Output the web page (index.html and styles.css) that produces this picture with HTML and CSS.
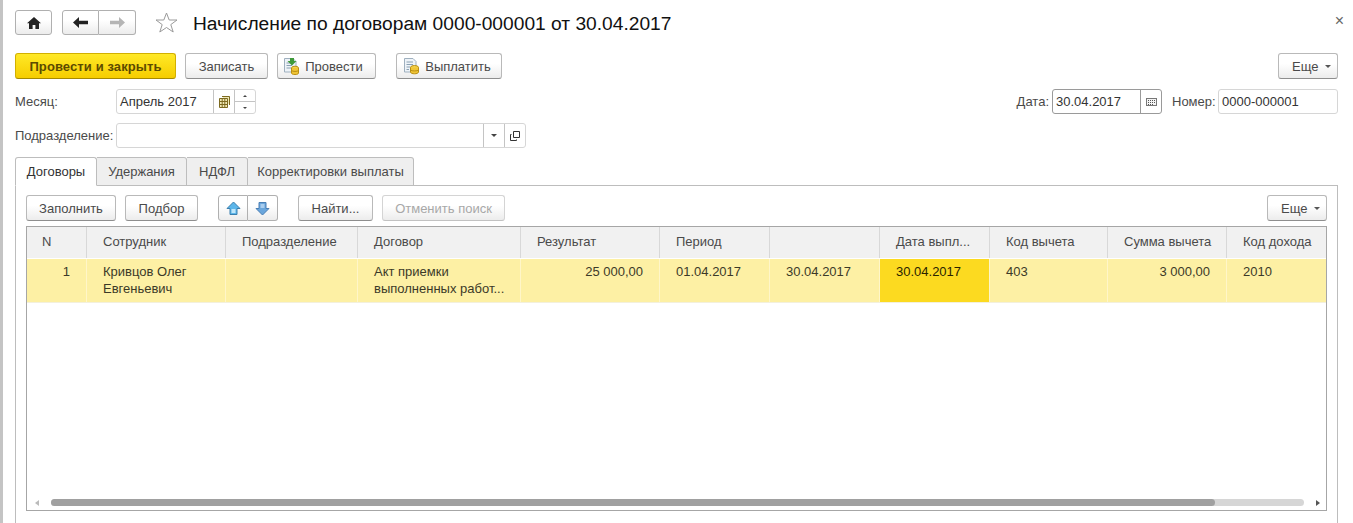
FILE: index.html
```html
<!DOCTYPE html>
<html lang="ru">
<head>
<meta charset="utf-8">
<title>Начисление по договорам</title>
<link rel="stylesheet" href="styles.css">
</head>
<body>
<div class="window">
  <header class="titlebar">
    <button class="btn nav-home"><svg width="14" height="12" viewBox="0 0 14 12"><path d="M7 0 14 6.2 12 6.2V12H8.4V8H5.6V12H2V6.2H0Z" fill="#222"/></svg></button>
    <div class="btn-group nav-arrows">
      <button class="btn seg"><svg width="15" height="11" viewBox="0 0 15 11"><path d="M0 5.5 6 0V3.8H15V7.2H6V11Z" fill="#222"/></svg></button>
      <button class="btn seg"><svg width="15" height="11" viewBox="0 0 15 11"><path d="M15 5.5 9 0V3.8H0V7.2H9V11Z" fill="#b5b5b5"/></svg></button>
    </div>
    <svg class="star" width="23" height="21" viewBox="0 0 23 21"><path d="M11.5 1 14.2 8H22L15.8 12.6 18.2 20 11.5 15.5 4.8 20 7.2 12.6 1 8H8.8Z" fill="#fff" stroke="#9a9a9a"/></svg>
    <h1 class="title">Начисление по договорам 0000-000001 от 30.04.2017</h1>
    <span class="close">×</span>
  </header>

  <div class="toolbar main-tools">
    <button class="btn primary">Провести и закрыть</button>
    <button class="btn w-save">Записать</button>
    <button class="btn w-post"><svg class="ico" width="17" height="18" viewBox="0 0 17 18"><path d="M1.5 1.5H10L13 4.5V15H1.5Z" fill="#eef3f8" stroke="#9fb0bf"/><path d="M3.5 6H10M3.5 8.500H9M3.500 11H8" stroke="#8aa0b2"/><path d="M7 1H11V4H13.500L9 8.500 4.500 4H7Z" fill="#3f9a3a"/><ellipse cx="12" cy="11" rx="3.500" ry="1.800" fill="#f5d24a" stroke="#b98f14"/><path d="M8.500 11V16C8.500 17 10 17.500 12 17.500S15.500 17 15.500 16V11" fill="#f0c536" stroke="#b98f14"/><path d="M8.500 13.500C9.500 14.800 14.500 14.800 15.500 13.500" fill="none" stroke="#b98f14"/></svg>Провести</button>
    <button class="btn w-pay"><svg class="ico" width="17" height="18" viewBox="0 0 17 18"><path d="M1.500 1.500H10L13 4.500V15H1.500Z" fill="#eef3f8" stroke="#9fb0bf"/><path d="M3.500 5H10M3.500 7.500H10M3.500 10H7M3.500 12.500H6" stroke="#8aa0b2"/><ellipse cx="11.500" cy="10.500" rx="4" ry="2" fill="#f5d24a" stroke="#b98f14"/><path d="M7.500 10.500V15C7.500 16.200 9.500 16.800 11.500 16.800S15.500 16.200 15.500 15V10.500" fill="#f0c536" stroke="#b98f14"/><path d="M7.500 13C8.500 14.300 14.500 14.300 15.500 13" fill="none" stroke="#b98f14"/></svg>Выплатить</button>
    <button class="btn more push">Еще<i class="caret"></i></button>
  </div>

  <div class="form-row row-month">
    <label class="lbl lbl-wide">Месяц:</label>
    <div class="field f-month">
      <span class="val">Апрель 2017</span>
      <span class="part part-cal"><svg width="11" height="12" viewBox="0 0 11 12"><path d="M3 .5H10.500V9M.5 2.500H8.500V11.500H.5ZM.5 5.500H8.500M.5 8.500H8.500M3.200 2.500V11.500M5.800 2.500V11.500" fill="#f0e8b4" stroke="#7d6a20"/></svg></span>
      <span class="spin"><span class="spin-up"><i class="tri-up"></i></span><span class="spin-down"><i class="tri-down"></i></span></span>
    </div>
    <label class="lbl lbl-date push">Дата:</label>
    <div class="field f-date">
      <span class="val">30.04.2017</span>
      <span class="part part-date"><svg width="11" height="8" viewBox="0 0 11 8"><rect x=".5" y=".5" width="10" height="7" fill="#f4f4f4" stroke="#777"/><path d="M2 2.500H9.500M2 4.500H9.500M2 6.500H7.500" stroke="#555" stroke-dasharray="1 1"/></svg></span>
    </div>
    <label class="lbl lbl-num">Номер:</label>
    <div class="field f-num"><span class="val">0000-000001</span></div>
  </div>

  <div class="form-row row-dep">
    <label class="lbl lbl-wide">Подразделение:</label>
    <div class="field f-dep">
      <span class="val"></span>
      <span class="part part-drop"><i class="tri-down dark"></i></span>
      <span class="part part-open"><svg width="10" height="10" viewBox="0 0 10 10"><path d="M3.500.5H9.500V6.500H3.500ZM1.500 3.500H.5V9.500H6.500V8.500" fill="none" stroke="#333"/></svg></span>
    </div>
  </div>

  <nav class="tabs">
    <span class="tab active t1">Договоры</span>
    <span class="tab t2">Удержания</span>
    <span class="tab t3">НДФЛ</span>
    <span class="tab t4">Корректировки выплаты</span>
  </nav>

  <section class="panel">
    <div class="toolbar">
      <button class="btn w-fill">Заполнить</button>
      <button class="btn w-pick">Подбор</button>
      <div class="btn-group updown">
        <button class="btn seg"><svg width="15" height="15" viewBox="0 0 15 15"><path d="M7.500 1 14 7.500H11V13.500H4V7.500H1Z" fill="#5cb6ea" stroke="#3b7fae"/><path d="M5.500 8H9.500V12H5.500Z" fill="#bfe6fa"/></svg></button>
        <button class="btn seg"><svg width="15" height="15" viewBox="0 0 15 15"><path d="M7.500 14 14 7.500H11V1.500H4V7.500H1Z" fill="#6aa6dc" stroke="#4a7fb5"/><path d="M5.500 3H9.500V7H5.500Z" fill="#a9cdee"/></svg></button>
      </div>
      <button class="btn w-find">Найти...</button>
      <button class="btn w-cancel disabled">Отменить поиск</button>
      <button class="btn more push">Еще<i class="caret"></i></button>
    </div>

    <div class="table">
      <div class="grid head">
        <div class="cell c-n">N</div>
        <div class="cell">Сотрудник</div>
        <div class="cell">Подразделение</div>
        <div class="cell">Договор</div>
        <div class="cell">Результат</div>
        <div class="cell">Период</div>
        <div class="cell"></div>
        <div class="cell">Дата выпл...</div>
        <div class="cell">Код вычета</div>
        <div class="cell num">Сумма вычета</div>
        <div class="cell">Код дохода</div>
      </div>
      <div class="grid row">
        <div class="cell num">1</div>
        <div class="cell">Кривцов Олег Евгеньевич</div>
        <div class="cell"></div>
        <div class="cell">Акт приемки выполненных работ...</div>
        <div class="cell num">25 000,00</div>
        <div class="cell">01.04.2017</div>
        <div class="cell">30.04.2017</div>
        <div class="cell current">30.04.2017</div>
        <div class="cell">403</div>
        <div class="cell num">3 000,00</div>
        <div class="cell">2010</div>
      </div>
      <div class="table-empty"></div>
      <div class="hscroll">
        <i class="arrow-left"></i>
        <div class="track"><div class="thumb"></div></div>
        <i class="arrow-right"></i>
      </div>
    </div>
  </section>
</div>
</body>
</html>
```
FILE: styles.css
```css
* { box-sizing: border-box; }
html, body { margin: 0; height: 100%; background: #fff; overflow: hidden; }
body { font: 13px/17px "Liberation Sans", Arial, sans-serif; color: #4a4a4a; }
svg { display: block; }
i { display: block; }

.window {
  height: 523px;
  border-left: 3px solid #c4c4c4;
  padding: 10px 15px 0 12px;
  display: flex;
  flex-direction: column;
}

/* title bar */
.titlebar { display: flex; align-items: center; height: 25px; flex: none; }
.title { margin: 1px 0 0 15px; font: 400 19.2px/25px "Liberation Sans", Arial, sans-serif; color: #111; white-space: nowrap; }
.star { margin-left: 19px; }
.close { margin-left: auto; margin-right: -6px; font-size: 16px; line-height: 16px; color: #666; margin-top: -3px; }

/* buttons */
.btn {
  display: flex; align-items: center; justify-content: center;
  height: 26px; padding: 0; flex: none;
  font: 13px/17px "Liberation Sans", Arial, sans-serif; color: #4a4a4a;
  background: linear-gradient(#fff 40%, #ececec);
  border: 1px solid #b9b9b9; border-bottom-color: #8e8e8e;
  border-radius: 3px;
}
.nav-home { width: 37px; height: 25px; border-color: #b0b0b0; }
.btn-group { display: flex; flex: none; }
.btn-group .seg { border-radius: 0; border-left: 0; }
.btn-group .seg:first-child { border-left: 1px solid #b0b0b0; border-radius: 3px 0 0 3px; }
.btn-group .seg:last-child { border-radius: 0 3px 3px 0; }
.nav-arrows { margin-left: 10px; }
.nav-arrows .seg { width: 37px; height: 25px; border-color: #b0b0b0; }
.primary {
  width: 161px; font-weight: 700; color: #5c4a00; letter-spacing: .1px;
  background: linear-gradient(#ffe927, #f6cd00);
  border-color: #d2b000; border-bottom-color: #a68a00;
}
.toolbar { display: flex; align-items: center; flex: none; }
.main-tools { margin-top: 18px; }
.w-save { width: 83px; }
.w-post { width: 99px; padding-right: 3px; }
.w-pay { width: 106px; }
.ico { margin-right: 5px; margin-left: -4px; }
.more { width: 60px; justify-content: flex-start; padding-left: 13px; }
.push { margin-left: auto !important; }
.caret { width: 0; height: 0; margin-left: 7px; margin-top: 1px; border: 3px solid transparent; border-top-color: #555; border-bottom: 0; }

/* form rows */
.form-row { display: flex; align-items: center; height: 25px; flex: none; }
.row-month { margin-top: 10px; }
.row-dep { margin-top: 9px; }
.lbl { white-space: nowrap; }
.lbl-wide { width: 101px; }
.lbl-date { margin-right: 3px; }
.lbl-num { width: 46px; margin-left: 10px; }
.field {
  display: flex; height: 25px; flex: none;
  border: 1px solid #d6d6d6; border-radius: 3px; background: #fff;
  color: #333;
}
.val { flex: 1; padding-left: 3px; line-height: 23px; white-space: nowrap; }
.part { display: flex; align-items: center; justify-content: center; flex: none; border-left: 1px solid #c4c4c4; }
.f-month { width: 140px; }
.part-cal { width: 21px; }
.spin { width: 21px; flex: none; display: flex; flex-direction: column; border-left: 1px solid #c4c4c4; }
.spin-up, .spin-down { flex: 1; display: flex; align-items: center; justify-content: center; }
.spin-up { border-bottom: 1px solid #c4c4c4; }
.tri-up { width: 0; height: 0; border: 2px solid transparent; border-bottom-color: #444; border-top: 0; }
.tri-down { width: 0; height: 0; border: 2px solid transparent; border-top-color: #444; border-bottom: 0; }
.tri-down.dark { border-width: 3px; border-bottom: 0; }
.f-date { width: 110px; border-color: #9a9a9a; }
.part-date { width: 21px; border-left-color: #9a9a9a; }
.f-num { width: 120px; }
.f-dep { width: 410px; }
.part-drop, .part-open { width: 21px; }

/* tabs */
.tabs { display: flex; margin-top: 9px; height: 29px; flex: none; position: relative; z-index: 1; margin-bottom: -1px; }
.tab {
  display: flex; align-items: center; justify-content: center;
  height: 29px; background: #efefef; white-space: nowrap;
  border: 1px solid #bdbdbd; border-left: 0; border-radius: 0 3px 0 0;
}
.tab.active { background: #fff; border-left: 1px solid #bdbdbd; border-bottom-color: #fff; border-radius: 3px 3px 0 0; color: #333; }
.t1 { width: 82px; }
.t2 { width: 90px; }
.t3 { width: 61px; }
.t4 { width: 166px; }

/* panel */
.panel {
  flex: 1; min-height: 0;
  border: 1px solid #bdbdbd; border-bottom: 0;
  padding: 9px 10px 0;
}
.toolbar > .btn + .btn, .toolbar > .btn-group + .btn { margin-left: 9px; }
.toolbar > .updown + .btn, .toolbar > .btn + .w-pay { margin-left: 20px; }
.w-fill { width: 90px; }
.w-pick { width: 73px; }
.updown { margin-left: 20px; }
.updown .seg { width: 30px; border-color: #b0b0b0; }
.w-find { width: 75px; }
.w-cancel { width: 123px; }
.disabled { color: #a8a8a8; border-color: #d4d4d4; border-bottom-color: #c2c2c2; }

/* table */
.table {
  margin-top: 5px; height: 285px;
  display: flex; flex-direction: column;
  border: 1px solid #a6a6a6;
}
.grid {
  display: grid; flex: none;
  grid-template-columns: 60px 139px 132px 163px 139px 110px 110px 110px 118px 119px 99px;
}
.head { height: 32px; background: #f1f1f1; border-bottom: 1px solid #fff; }
.head .cell { line-height: 30px; border-right: 1px solid #d8d8d8; white-space: nowrap; }
.head .c-n { padding-left: 15px; }
.cell { padding: 0 15px 0 16px; }
.head .cell:last-child, .row .cell:last-child { border-right: 0; }
.num { text-align: right; }
.row { height: 44px; background: #fdf0a4; border-bottom: 1px solid #f3f0dc; color: #3c3a28; }
.row .cell { padding-top: 4px; border-right: 1px solid #fff6c8; }
.row .num { padding-right: 16px; }
.row .current { background: #fcda20; color: #2a2400; }
.table-empty { flex: 1; }
.hscroll { display: flex; align-items: center; height: 7px; margin-bottom: 4px; flex: none; padding: 0 8px; }
.track { margin: 0 7px 0 12px; width: 1253px; height: 7px; background: #d6d6d6; border-radius: 4px; flex: none; }
.thumb { width: 1164px; height: 7px; background: #a0a0a0; border-radius: 4px; }
.arrow-left { width: 0; height: 0; border: 3px solid transparent; border-right: 4px solid #bbb; border-left: 0; margin-left: 0; }
.arrow-right { width: 0; height: 0; border: 3px solid transparent; border-left: 4px solid #555; border-right: 0; margin-left: 5px; }
```
